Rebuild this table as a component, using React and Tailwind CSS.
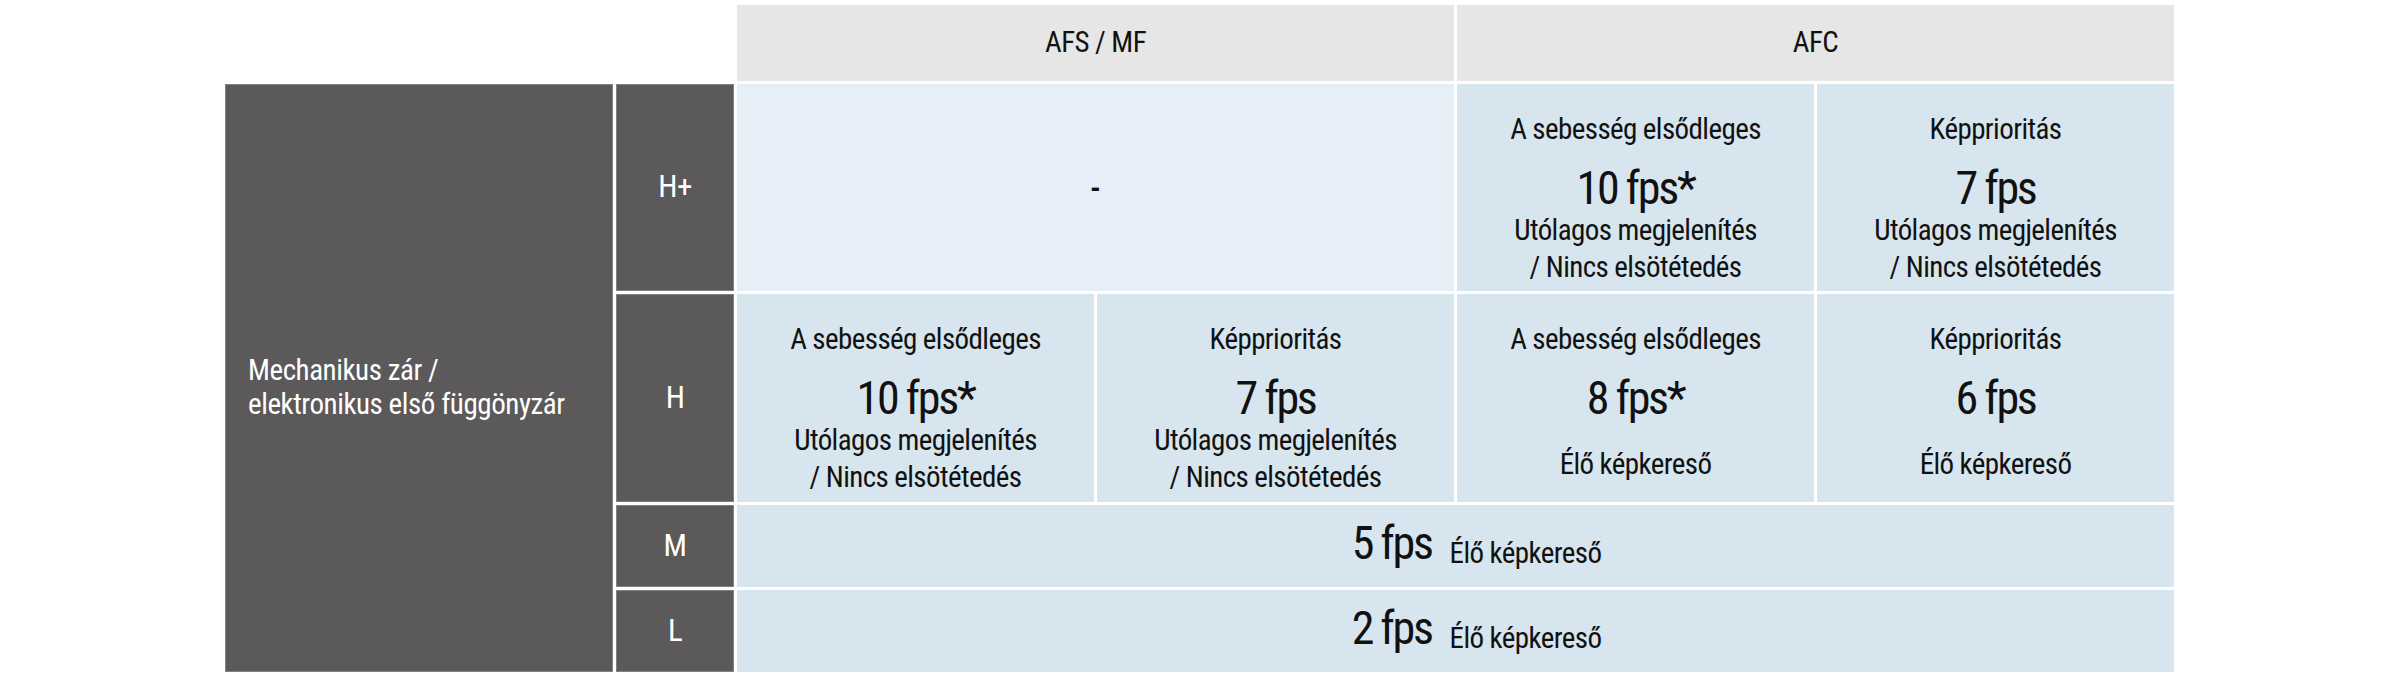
import React from "react";

const note = ["Utólagos megjelenítés", "/ Nincs elsötétedés"];

function Cell({ label, fps, lines, live }) {
  return (
    <div className="bg-[#d7e5ee] flex flex-col items-center pt-[27px] text-center text-[29px] leading-[37px] tracking-[-0.02em]">
      <div>{label}</div>
      <div className="mt-[16px] text-[46px] leading-[48px] tracking-[-0.05em]">{fps}</div>
      {live ? (
        <div className="h-[74px] flex items-center justify-center pt-[10px]">Élő képkereső</div>
      ) : (
        lines.map((l) => <div key={l}>{l}</div>)
      )}
    </div>
  );
}

function RowLabel({ children }) {
  return (
    <div className="bg-[#5b5959] border border-[#828080] flex items-center justify-center text-white text-[31px] tracking-[-0.02em]">
      {children}
    </div>
  );
}

function WideRow({ fps }) {
  return (
    <div className="col-span-4 bg-[#d7e5ee] flex items-baseline justify-center gap-[18px] pl-[42px] pt-[4px]">
      <span className="text-[46px] tracking-[-0.05em]">{fps}</span>
      <span className="text-[29px] tracking-[-0.02em] relative top-[4px]">Élő képkereső</span>
    </div>
  );
}

export default function App() {
  return (
    <div className="w-[2400px] h-[676px] bg-white pl-[225px] pt-[5px] text-[#111] font-['Roboto_Condensed','DejaVu_Sans_Condensed',sans-serif]">
      <div className="grid grid-cols-[388px_118px_357px_357px_357px_357px] grid-rows-[76px_207px_208px_82px_82px] gap-[3px]">
        {/* header */}
        <div className="col-span-2" />
        <div className="col-span-2 bg-[#e6e6e6] flex items-center justify-center text-[29px] tracking-[-0.02em]">AFS / MF</div>
        <div className="col-span-2 bg-[#e6e6e6] flex items-center justify-center text-[29px] tracking-[-0.02em]">AFC</div>

        {/* shutter type */}
        <div className="row-span-4 bg-[#5b5959] border border-[#828080] flex flex-col justify-center pl-[22px] pt-[18px] text-white text-[29px] leading-[34px] tracking-[-0.015em]">
          <div>Mechanikus zár /</div>
          <div>elektronikus első függönyzár</div>
        </div>

        {/* H+ */}
        <RowLabel>H+</RowLabel>
        <div className="col-span-2 bg-[#e6eff7] flex items-center justify-center text-[30px] font-bold">-</div>
        <Cell label="A sebesség elsődleges" fps="10 fps*" lines={note} />
        <Cell label="Képprioritás" fps="7 fps" lines={note} />

        {/* H */}
        <RowLabel>H</RowLabel>
        <Cell label="A sebesség elsődleges" fps="10 fps*" lines={note} />
        <Cell label="Képprioritás" fps="7 fps" lines={note} />
        <Cell label="A sebesség elsődleges" fps="8 fps*" live />
        <Cell label="Képprioritás" fps="6 fps" live />

        {/* M */}
        <RowLabel>M</RowLabel>
        <WideRow fps="5 fps" />

        {/* L */}
        <RowLabel>L</RowLabel>
        <WideRow fps="2 fps" />
      </div>
    </div>
  );
}
